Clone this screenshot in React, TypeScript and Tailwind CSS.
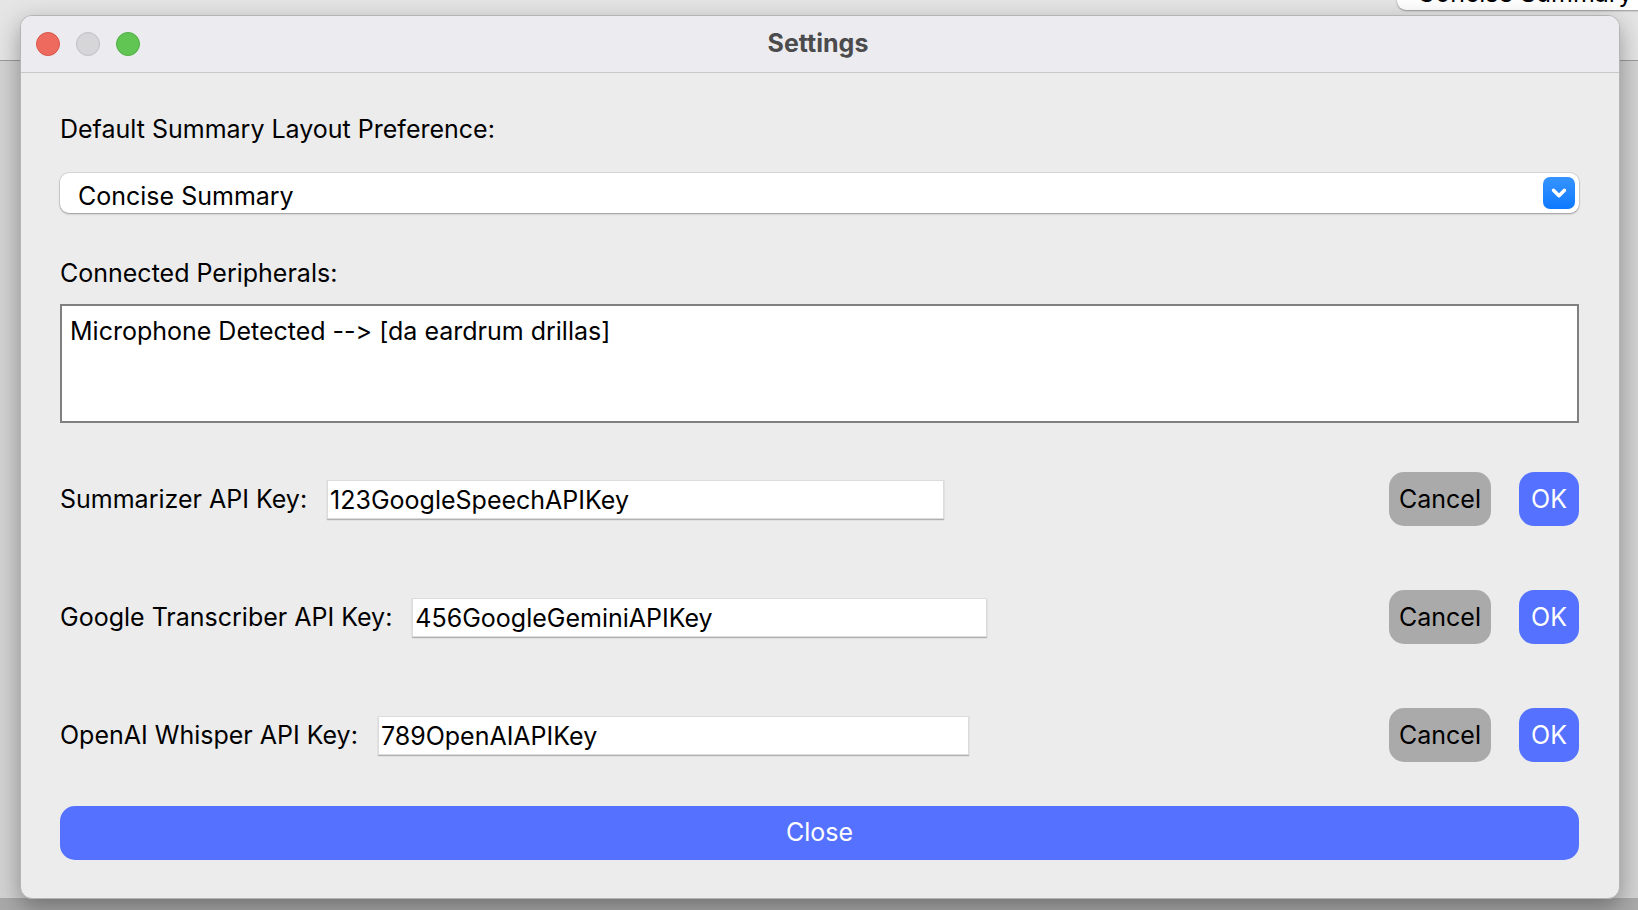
import { ChevronDown } from 'lucide-react';

const apiKeys = [
  { label: 'Summarizer API Key:', value: '123GoogleSpeechAPIKey', width: 'w-[617px]' },
  { label: 'Google Transcriber API Key:', value: '456GoogleGeminiAPIKey', width: 'w-[575px]' },
  { label: 'OpenAI Whisper API Key:', value: '789OpenAIAPIKey', width: 'w-[591px]' },
];

function TrafficLights() {
  return (
    <div className="flex items-center gap-[16px] pl-[15px]">
      <span className="w-[24px] h-[24px] rounded-full bg-[#ee6a5f] border border-[#d5574c]" />
      <span className="w-[24px] h-[24px] rounded-full bg-[#d6d6d9] border border-[#c0c0c4]" />
      <span className="w-[24px] h-[24px] rounded-full bg-[#61c554] border border-[#4fae43]" />
    </div>
  );
}

function KeyRow({ label, value, width }: { label: string; value: string; width: string }) {
  return (
    <div className="flex items-center h-[54px]">
      <span className="pt-[2px] text-black">{label}</span>
      <input
        readOnly
        value={value}
        className={`ml-[20px] ${width} h-[39px] bg-white px-[2px] pt-[2px] text-black outline-none border border-[#dcdcdc] shadow-[0_1px_1px_rgba(0,0,0,0.25)]`}
      />
      <div className="flex-1" />
      <button className="w-[102px] h-[54px] pt-[2px] rounded-[15px] bg-[#aaaaaa] text-black">Cancel</button>
      <button className="ml-[28px] w-[60px] h-[54px] pt-[2px] rounded-[15px] bg-[#5472ff] text-white">OK</button>
    </div>
  );
}

export default function App() {
  return (
    <div className="relative w-[1638px] h-[910px] overflow-hidden bg-[#d3d3d3] font-['Inter','Noto_Sans',sans-serif] text-[25px] [font-feature-settings:'calt'_0,'liga'_0]">
      {/* window underneath */}
      <div className="absolute inset-x-0 top-0 h-[61px] bg-[#e5e5e5] border-b border-[#9c9c9c]" />
      <div className="absolute left-[1397px] -top-[24px] w-[260px] h-[34px] rounded-[9px] bg-white shadow-[0_1px_2px_rgba(0,0,0,0.35)] pl-[20px] leading-[34px] text-black">
        Concise Summary
      </div>
      <div className="absolute inset-x-0 bottom-0 h-[12px] bg-[#a9a9a9]" />

      {/* settings window */}
      <div className="relative ml-[20px] mt-[15px] w-[1600px] h-[884px] rounded-[12px] overflow-hidden border border-[#b4b4b4] bg-[#ececec] shadow-[0_8px_24px_rgba(0,0,0,0.35)] flex flex-col">
        <div className="relative h-[57px] shrink-0 bg-[#ececf0] border-b border-[#c8c8cb] flex items-center">
          <TrafficLights />
          <div className="absolute inset-0 flex items-center justify-center pr-[4px] text-[25px] font-bold text-[#4b4b4d]">
            Settings
          </div>
        </div>

        <div className="flex-1 pl-[39px] pr-[40px] pt-[43px] flex flex-col">
          <div className="leading-[26px] text-black">Default Summary Layout Preference:</div>

          <div className="mt-[31px] h-[40px] rounded-[9px] bg-white shadow-[0_0_0_1px_rgba(0,0,0,0.08),0_1px_2px_rgba(0,0,0,0.3)] flex items-center pl-[18px] pr-[4px]">
            <span className="flex-1 pt-[7px] text-black">Concise Summary</span>
            <span className="w-[32px] h-[32px] rounded-[7px] bg-gradient-to-b from-[#3594ff] to-[#0a79ff] flex items-center justify-center">
              <ChevronDown className="w-[22px] h-[22px] text-white" strokeWidth={3.75} />
            </span>
          </div>

          <div className="mt-[47px] leading-[26px] text-black">Connected Peripherals:</div>

          <div className="mt-[18px] h-[119px] bg-white border-2 border-[#808080] px-[8px] pt-[12px] leading-[26px] text-black">
            Microphone Detected --&gt; [da eardrum drillas]
          </div>

          <div className="mt-[49px] flex flex-col gap-[64px]">
            {apiKeys.map((k) => (
              <KeyRow key={k.label} {...k} />
            ))}
          </div>

          <button className="mt-[44px] h-[54px] rounded-[15px] bg-[#5472ff] text-white">Close</button>
        </div>
      </div>
    </div>
  );
}
